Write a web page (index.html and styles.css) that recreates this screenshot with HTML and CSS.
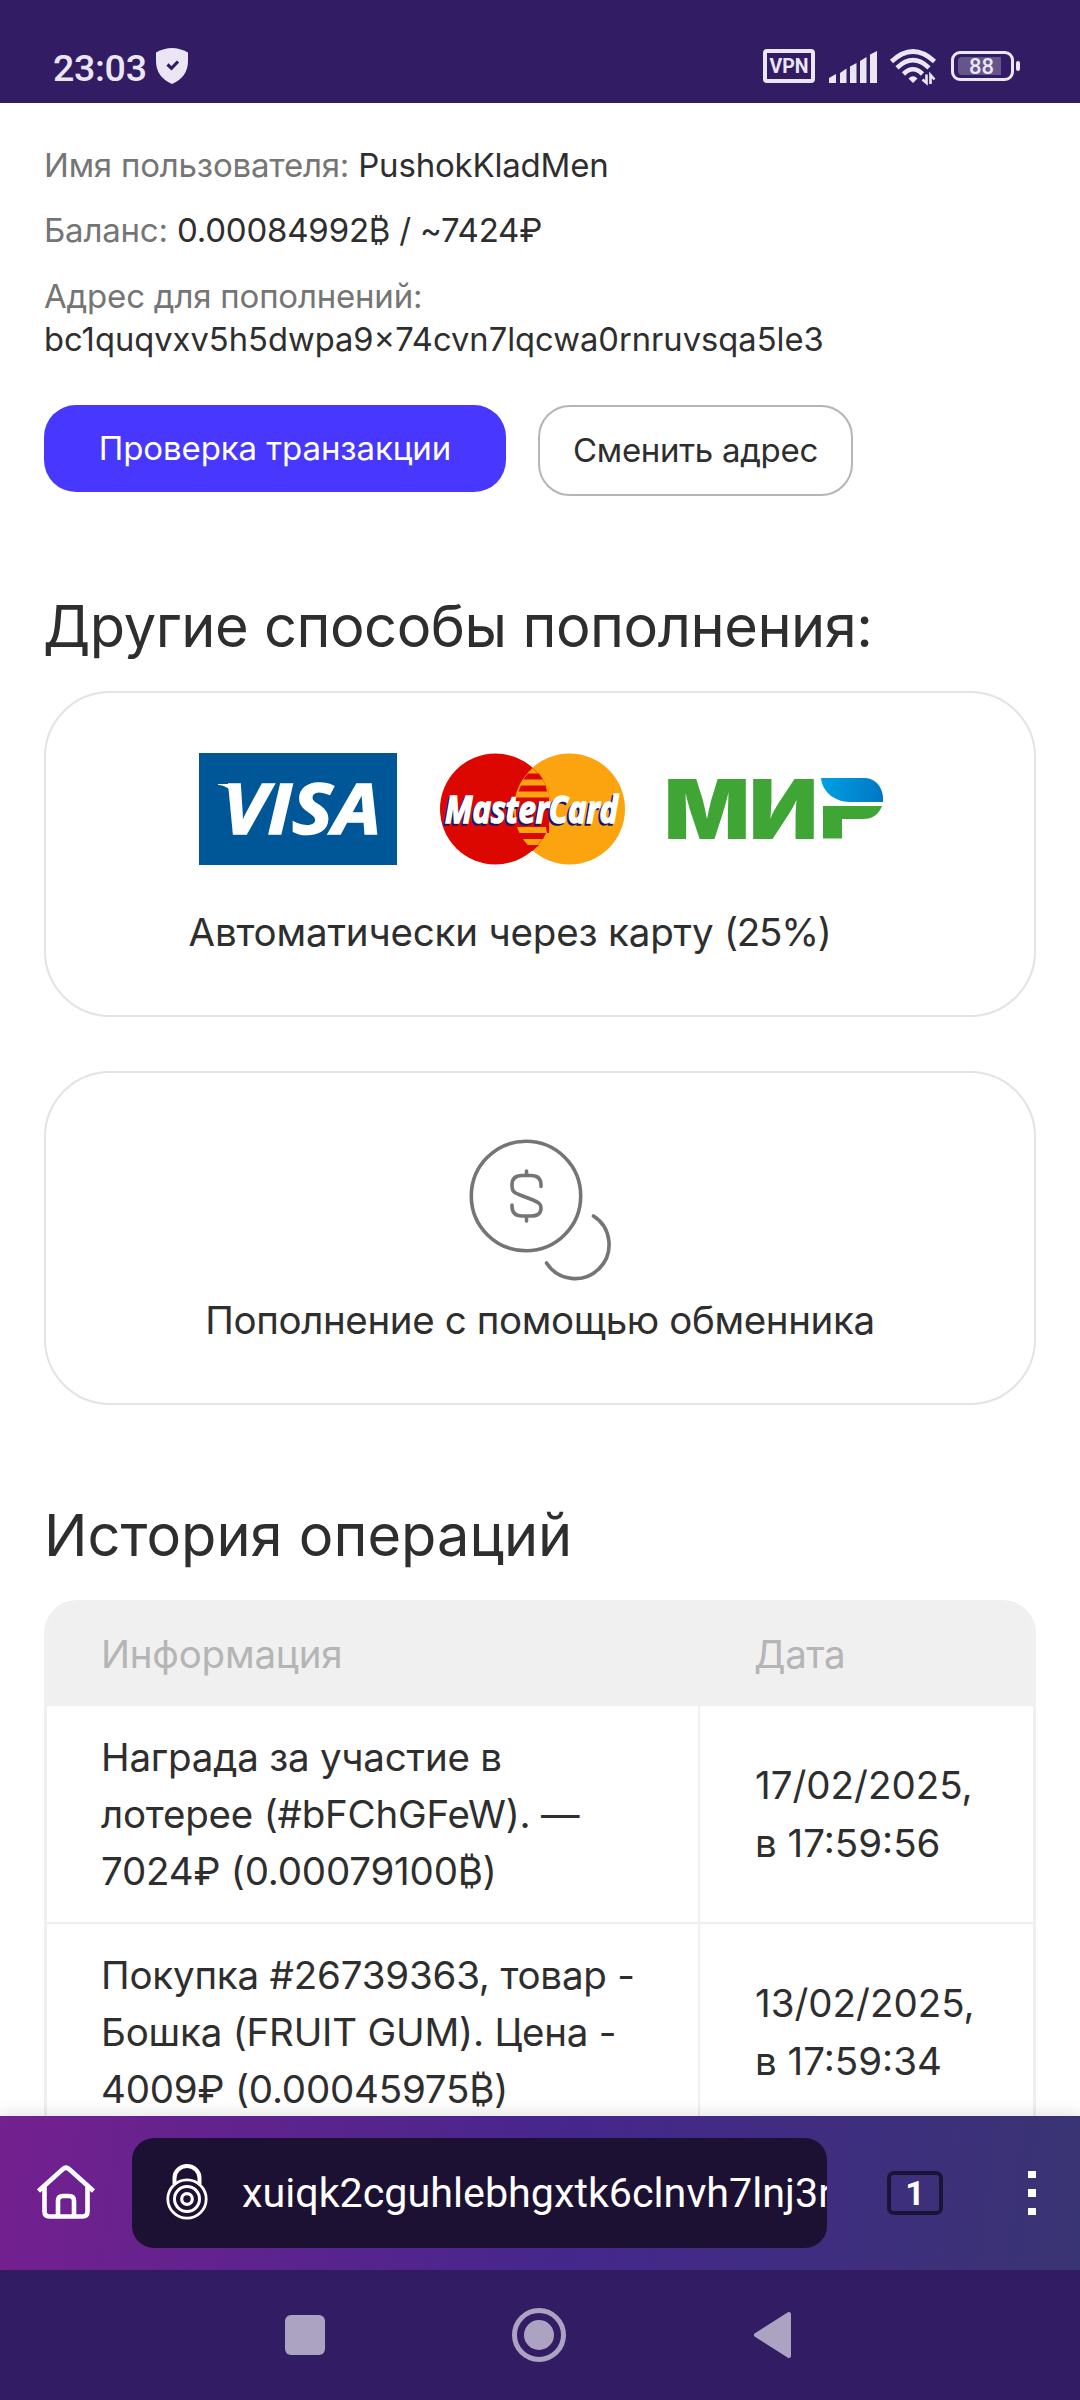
FILE: index.html
```html
<!DOCTYPE html>
<html lang="ru">
<head>
<meta charset="utf-8">
<title>Баланс</title>
<link rel="stylesheet" href="styles.css">
</head>
<body>
<header class="status">
  <span class="clock">23:03</span>
  <svg class="shield" width="32" height="36" viewBox="0 0 32 36"><path d="M16 0Q24 0 32 4.500V13Q32 29 16 36Q0 29 0 13V4.500Q8 0 16 0Z" fill="#eae6f3"/><path d="M11.500 16.500l4 3.800 6.500-6.800" fill="none" stroke="#321c63" stroke-width="3.200"/></svg>
  <span class="vpn">VPN</span>
  <svg class="signal" width="48" height="32" viewBox="0 0 48 32" fill="#eae6f3"><path d="M0 32V27L7 23V32ZM11 32V22L17.500 17.500V32ZM21 32V15.500L27.500 12V32ZM31 32V10L37.500 6V32ZM41 32V3.500L48 0V32Z"/></svg>
  <svg class="wifi" width="46" height="36" viewBox="0 0 46 36" fill="none" stroke="#eae6f3" stroke-width="4.600"><path d="M1.500 12.500Q23-7.500 44.500 12.500"/><path d="M7 18.800Q23 3.500 39 18.800"/><path d="M13.500 25Q23 15.500 32.500 25"/><path d="M18.500 29.500Q23 25 27.500 29.500L23 34Z" fill="#eae6f3" stroke="none"/><path d="M36.500 25.500V34l-4-3.500M40.500 35V26l4 4.500" stroke-width="2.600"/></svg>
  <span class="battery"><span class="charge">88</span></span>
</header>

<main class="page">
  <p class="line"><span class="muted">Имя пользователя:</span> PushokKladMen</p>
  <p class="line balance"><span class="muted">Баланс:</span> 0.00084992₿ / ~7424₽</p>
  <p class="line address"><span class="muted">Адрес для пополнений:</span><br><span class="wallet">bc1quqvxv5h5dwpa9x74cvn7lqcwa0rnruvsqa5le3</span></p>
  <div class="actions">
    <button class="btn primary">Проверка транзакции</button>
    <button class="btn outline">Сменить адрес</button>
  </div>

  <h2 class="methods">Другие способы пополнения:</h2>
  <section class="card cards-pay">
    <div class="logos">
      <svg width="198" height="112" viewBox="0 0 198 112">
        <rect width="198" height="112" fill="#005798"/>
        <text class="visa" x="23" y="81" textLength="159" lengthAdjust="spacingAndGlyphs">VISA</text>
        <path d="M19 31H34V41Q30 33 19 31.800Z" fill="#fff"/>
      </svg>
      <svg width="185" height="112" viewBox="0 0 185 112">
        <circle cx="129.500" cy="56" r="55.500" fill="#fba40f"/>
        <circle cx="55.500" cy="56" r="55.500" fill="#db0700"/>
        <path d="M92.500 15Q111 32 111 56T92.500 97Q74 80 74 56T92.500 15Z" fill="#fba40f"/>
        <g fill="#db0700"><path d="M88 20.500H99L103 26.500H83ZM81 32.500H105.500L107 38.500H78.500ZM77 44.500H109V80H107L106 74H76V44.500ZM78 80H106L103 86H81ZM84 92H99L92.500 98Z"/></g>
        <text class="mc shadow" x="3" y="72" textLength="173" lengthAdjust="spacingAndGlyphs">MasterCard</text>
        <text class="mc" x="5" y="70" textLength="173" lengthAdjust="spacingAndGlyphs">MasterCard</text>
      </svg>
      <svg class="mir-logo" width="215" height="61" viewBox="0 0 215 61">
        <defs><linearGradient id="mir"><stop offset="0" stop-color="#00a0e3"/><stop offset="1" stop-color="#0077c4"/></linearGradient></defs>
        <text class="mir" x="-4" y="60.500" textLength="86" lengthAdjust="spacingAndGlyphs">М</text>
        <text class="mir" x="81" y="60.500" textLength="69" lengthAdjust="spacingAndGlyphs">И</text>
        <path d="M153 0H196C208 0 216 10 215 24H182C166 24 154 13 153 0Z" fill="url(#mir)"/>
        <path d="M155 28H214Q209 41 195 41H174V60.500H155Z" fill="#3fa535"/>
      </svg>
    </div>
    <p class="caption auto">Автоматически через карту <span class="fee">(25%)</span></p>
  </section>
  <section class="card exchange">
    <svg width="142" height="142" viewBox="1 0.500 142 142" fill="none" stroke="#757575" stroke-width="3.600" stroke-linecap="round">
      <circle cx="58" cy="57.500" r="54.700"/>
      <path d="M73 48V46.500Q73 37 63 37H54Q44 37 44 46.500C44 53.500 46 54 52 56.500L65 61.500C71 64 73 65.500 73 69.500Q73 77.500 63 77.500H54Q44 77.500 44 67.500V66.500M58.500 32.500V36.500M58.500 78.500V82.500"/>
      <path d="M125.500 77.500A34 34 0 1 1 78.500 124.500"/>
    </svg>
    <p class="caption">Пополнение с помощью обменника</p>
  </section>

  <h2>История операций</h2>
  <div class="table">
    <div class="row head"><div>Информация</div><div>Дата</div></div>
    <div class="row"><div>Награда за участие в<br>лотерее (#bFChGFeW). —<br>7024₽ (0.00079100₿)</div><div>17/02/2025,<br>в 17:59:56</div></div>
    <div class="row"><div>Покупка #26739363, товар -<br>Бошка (FRUIT GUM). Цена -<br>4009₽ (0.00045975₿)</div><div>13/02/2025,<br>в 17:59:34</div></div>
  </div>
</main>

<div class="toolbar">
  <svg class="home" width="58" height="54" viewBox="0 0 58 54" fill="none" stroke="#fff" stroke-width="4.600" stroke-linejoin="round"><path d="M1.500 26L26 4Q29 1.500 32 4L56.500 26"/><path d="M7.500 22V46.500Q7.500 51.500 12.500 51.500H45.500Q50.500 51.500 50.500 46.500V22"/><path d="M21 51V36Q21 31 26 31H32Q37 31 37 36V51"/></svg>
  <div class="url">
    <svg class="onion" width="42" height="56" viewBox="0 0 42 56" fill="none" stroke="#fff"><path d="M8.500 20V14A12.500 12 0 0 1 33.500 14V20" stroke-width="4"/><circle cx="21" cy="35" r="19.200" stroke-width="2.800"/><circle cx="21" cy="35" r="12.500" stroke-width="3"/><circle cx="21" cy="35" r="5.300" stroke-width="3.200"/></svg>
    <span class="host">xuiqk2cguhlebhgxtk6clnvh7lnj3r</span>
  </div>
  <span class="tabs">1</span>
  <span class="menu"><i></i><i></i><i></i></span>
</div>
<nav class="nav">
  <svg width="40" height="40" viewBox="0 0 40 40"><rect width="40" height="40" rx="6" fill="#aca3c3"/></svg>
  <svg width="54" height="54" viewBox="0 0 54 54"><circle cx="27" cy="27" r="24.500" fill="none" stroke="#aca3c3" stroke-width="5"/><circle cx="27" cy="27" r="15" fill="#aca3c3"/></svg>
  <svg width="38" height="46" viewBox="-1 0 38 46"><path d="M2 23L35 2V44Z" fill="#aca3c3" stroke="#aca3c3" stroke-width="4" stroke-linejoin="round"/></svg>
</nav>
</body>
</html>
```
FILE: styles.css
```css
* { box-sizing: border-box; }
body {
  margin: 0;
  width: 1080px;
  height: 2400px;
  display: flex;
  flex-direction: column;
  overflow: hidden;
  background: #fff;
  color: #2e2e2e;
  font-family: Inter, "Liberation Sans", sans-serif;
}
svg { display: block; flex: none; overflow: visible; }
p, h2 { margin: 0; font-weight: 400; }

.status {
  height: 103px;
  flex: none;
  background: #321c63;
  color: #eae6f3;
  font-family: Roboto, sans-serif;
  display: flex;
  align-items: flex-start;
  padding: 48px 66px 0 53px;
}
.clock { font-size: 37.5px; font-weight: 500; line-height: 40px; width: 103px; letter-spacing: -0.3px; }
.vpn {
  margin: 1px 14px 0 auto;
  width: 52px;
  height: 34px;
  border: 4px solid #eae6f3;
  border-radius: 4px;
  font-size: 19.5px;
  font-weight: 700;
  line-height: 27px;
  text-align: center;
}
.signal { margin: 3px 13px 0 0; }
.wifi { margin: 1px 15px 0 0; }
.battery {
  position: relative;
  margin-top: 3px;
  width: 63px;
  height: 30px;
  border: 3px solid #eae6f3;
  border-radius: 9px;
  padding: 3px 9px 3px 4px;
}
.battery::after {
  content: "";
  position: absolute;
  right: -9px;
  top: 7px;
  width: 4px;
  height: 10px;
  border-radius: 2px;
  background: #eae6f3;
}
.charge {
  display: block;
  width: 43px;
  height: 18px;
  background: #66558b;
  border-radius: 4px 0 0 4px;
  font-size: 22px;
  font-weight: 500;
  line-height: 20px;
  padding-left: 11px;
}

.page { height: 2013px; flex: none; padding: 40.5px 44px 0; overflow: hidden; }
.line { font-size: 33px; line-height: 43px; letter-spacing: -0.2px; white-space: nowrap; }
.balance { margin-top: 22px; }
.address { margin-top: 23.5px; }
.wallet { font-size: 32.7px; letter-spacing: 0; }
.muted { color: #757575; }
.actions { display: flex; align-items: flex-start; gap: 32px; margin-top: 44px; }
.btn {
  font: 400 33px/87px Inter, "Liberation Sans", sans-serif;
  border: 0;
  border-radius: 32px;
  padding: 0;
  white-space: nowrap;
}
.primary { width: 462px; background: #4737ff; color: #fff; letter-spacing: -0.1px; }
.outline { width: 315px; border: 2px solid #b5b5b5; background: #fff; color: #2e2e2e; letter-spacing: -0.3px; }
h2 { font-size: 57.75px; line-height: 66px; margin-top: 97px; white-space: nowrap; }
.methods { letter-spacing: -0.46px; text-indent: -1px; }

.card { border: 2px solid #e3e3e3; border-radius: 66px; }
.cards-pay { margin-top: 32px; height: 326px; padding: 60px 0 0 152.5px; }
.logos { display: flex; align-items: center; gap: 43px; }
.mir-logo { margin-bottom: 2px; }
.caption { font-size: 38.5px; line-height: 46px; letter-spacing: -0.37px; white-space: nowrap; }
.auto { margin: 44px 0 0 -10px; letter-spacing: -0.17px; }
.fee { letter-spacing: -1.3px; }
.visa { font: italic 700 70px "Open Sans", sans-serif; fill: #fff; stroke: #fff; stroke-width: 1.5px; }
.mc { font: italic 700 38px "Open Sans", sans-serif; fill: #fff; stroke: #fff; stroke-width: 1.5px; }
.mc.shadow { fill: #1b1464; stroke: #1b1464; }
.mir { font: 900 83px Inter, sans-serif; fill: #3fa535; }

.exchange {
  margin-top: 54px;
  height: 334px;
  padding-top: 66px;
  display: flex;
  flex-direction: column;
  align-items: center;
}
.exchange .caption { margin-top: 16px; }

.table {
  margin-top: 32px;
  border: 3px solid #f0f0f0;
  border-bottom: 0;
  border-radius: 33px 33px 0 0;
  background: #fff;
  overflow: hidden;
}
.row {
  display: grid;
  grid-template-columns: 651px 1fr;
  height: 218px;
  border-bottom: 2px solid #f0f0f0;
  font-size: 38.5px;
  line-height: 57.2px;
  white-space: nowrap;
}
.row > div { display: flex; flex-direction: column; justify-content: center; padding: 1px 0 0 54px; letter-spacing: -0.2px; }
.row > div + div { border-left: 2px solid #f0f0f0; padding-left: 55px; letter-spacing: 0; }
.row.head { height: 103px; background: #f0f0f0; color: #b5b5b5; border: 0; }
.row.head > div + div { padding-left: 54px; letter-spacing: -0.4px; }

.toolbar {
  position: relative;
  height: 154px;
  flex: none;
  display: flex;
  align-items: center;
  padding-left: 37px;
  background: linear-gradient(97deg, #74208f 0%, #45278c 52%, #393473 100%);
  box-shadow: 0 -4px 14px rgba(0, 0, 0, 0.1);
}
.url {
  margin-left: 37px;
  width: 695px;
  height: 110px;
  border-radius: 22px;
  background: #1d1133;
  color: #fff;
  display: flex;
  align-items: center;
  overflow: hidden;
  padding-left: 34px;
}
.host { margin-left: 34px; font: 41.25px/48px Roboto, sans-serif; white-space: nowrap; }
.onion, .home { position: relative; top: -1px; }
.tabs {
  margin-left: 60px;
  width: 56px;
  height: 44px;
  border: 4px solid #1b1437;
  border-radius: 7px;
  color: #fff;
  font: 700 34px/37px Roboto, sans-serif;
  text-align: center;
}
.menu { margin-left: 85px; display: flex; flex-direction: column; gap: 11px; }
.menu i { width: 8px; height: 7.5px; background: #fff; }
.nav {
  flex: 1;
  background: #321c63;
  display: flex;
  align-items: center;
  padding-left: 285px;
  gap: 187px;
}
```
